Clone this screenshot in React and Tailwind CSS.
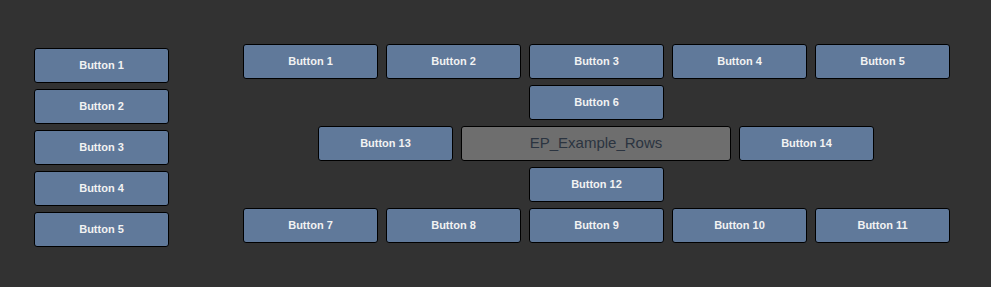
const btn =
  "h-[35px] w-[135px] rounded-[3px] border border-black bg-[#60799a] text-[11px] font-bold text-[#f2f2f2] flex items-center justify-center";

function Btn({ label }) {
  return <div className={btn}>{label}</div>;
}

export default function App() {
  const left = ["Button 1", "Button 2", "Button 3", "Button 4", "Button 5"];
  const top = ["Button 1", "Button 2", "Button 3", "Button 4", "Button 5"];
  const bottom = ["Button 7", "Button 8", "Button 9", "Button 10", "Button 11"];

  return (
    <div
      className="w-[991px] h-[287px] bg-[#323232] flex items-start pl-[34px] pt-[44px]"
      style={{ fontFamily: '"Liberation Sans", Arial, sans-serif' }}
    >
      <div className="mt-[4px] flex flex-col gap-[6px]">
        {left.map((b) => (
          <Btn key={b} label={b} />
        ))}
      </div>

      <div className="ml-[74px] w-[707px] flex flex-col gap-[6px]">
        <div className="flex gap-[8px]">
          {top.map((b) => (
            <Btn key={b} label={b} />
          ))}
        </div>
        <div className="flex justify-center">
          <Btn label="Button 6" />
        </div>
        <div className="flex gap-[8px] pl-[75px]">
          <Btn label="Button 13" />
          <div className="h-[35px] w-[270px] rounded-[3px] border border-black bg-[#6e6e6e] text-[15px] text-[#2b3440] flex items-center justify-center">
            EP_Example_Rows
          </div>
          <Btn label="Button 14" />
        </div>
        <div className="flex justify-center">
          <Btn label="Button 12" />
        </div>
        <div className="flex gap-[8px]">
          {bottom.map((b) => (
            <Btn key={b} label={b} />
          ))}
        </div>
      </div>
    </div>
  );
}
